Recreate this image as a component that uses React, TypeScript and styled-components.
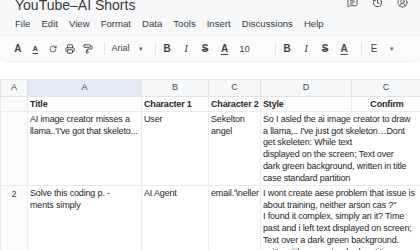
import React from 'react';
import styled, { createGlobalStyle } from 'styled-components';
import { MessageSquareText, History, CircleUserRound, Printer, PaintRoller, RotateCw } from 'lucide-react';

const MENU: Array<string> = ['File', 'Edit', 'View', 'Format', 'Data', 'Tools', 'Insert', 'Discussions', 'Help'];

const COLS: Array<number> = [27, 114, 67, 52, 91, 69];
const LETTERS: Array<string> = ['A', 'A', 'B', 'C', 'D', 'C'];

type Row = { num: string; title: string[]; c1: string[]; c2: string[]; style: string[]; h: number };

// lines are kept as in the sheet, the cells don't re-wrap
const ROWS: Array<Row> = [
  {
    num: '',
    title: ['AI image creator misses a', "llama..'I've got that skeleto..."],
    c1: ['User'],
    c2: ['Sekelton', 'angel'],
    style: [
      'So I asled the ai image creator to draw',
      "a llama,.. I've just got skeleton…Dont",
      'get skeleten: While text',
      'displayed on the screen; Text over',
      'dark green background, written in title',
      'case standard partition',
    ],
    h: 74,
  },
  {
    num: '2',
    title: ['Solve this coding p. -', 'ments simply'],
    c1: ['AI Agent'],
    c2: ["email.'\\neller"],
    style: [
      'I wont create aese problem that issue is',
      'about training, neither arson cas ?"',
      'I found it complex, simply an it? Time',
      'past and i left text displayed on screen;',
      'Text over a dark green background.',
      'written title case standard partition',
    ],
    h: 90,
  },
];

function App() {
  return (
    <Page>
      <GlobalStyle />
      <TopPanel>
        <TitleRow>
          <DocTitle>YouTube–AI Shorts</DocTitle>
          <TopIcons>
            <MessageSquareText size={11} strokeWidth={2} />
            <History size={11} strokeWidth={2.2} />
            <CircleUserRound size={11} strokeWidth={2} />
          </TopIcons>
        </TitleRow>
        <MenuBar>
          {MENU.map(item => <MenuItem key={item}>{item}</MenuItem>)}
        </MenuBar>
        <Toolbar>
          <ToolBtn $w={17.5}><Glyph $size={10} $weight={700}>A</Glyph></ToolBtn>
          <ToolBtn $w={17.5}><Glyph $size={7.5} $weight={600} $under>A</Glyph></ToolBtn>
          <ToolBtn $w={17.5}><RotateCw size={8} strokeWidth={2.4} /></ToolBtn>
          <ToolBtn $w={17.5}><Printer size={10} strokeWidth={2.2} /></ToolBtn>
          <ToolBtn $w={17.5}><PaintRoller size={10} strokeWidth={2.2} /></ToolBtn>
          <Sep $ml={7} $mr={7} />
          <ToolBtn $w={24} $left><Glyph $size={9}>Arial</Glyph></ToolBtn>
          <ToolBtn $w={10}><Caret>▾</Caret></ToolBtn>
          <Sep $ml={9} $mr={2} />
          <ToolBtn $w={19}><Glyph $size={10} $weight={700}>B</Glyph></ToolBtn>
          <ToolBtn $w={19}><Glyph $size={11} $serif $italic>I</Glyph></ToolBtn>
          <ToolBtn $w={19}><Glyph $size={10} $weight={600} $strike>S</Glyph></ToolBtn>
          <ToolBtn $w={20}><Glyph $size={10} $weight={600} $under>A</Glyph></ToolBtn>
          <ToolBtn $w={20}><Glyph $size={9.5} $weight={500}>10</Glyph></ToolBtn>
          <Sep $ml={20} $mr={2} />
          <ToolBtn $w={19}><Glyph $size={10} $weight={700}>B</Glyph></ToolBtn>
          <ToolBtn $w={19}><Glyph $size={11} $serif $italic>I</Glyph></ToolBtn>
          <ToolBtn $w={19}><Glyph $size={10} $weight={600} $strike>S</Glyph></ToolBtn>
          <ToolBtn $w={19}><Glyph $size={10} $weight={600} $under>A</Glyph></ToolBtn>
          <Sep $ml={7} $mr={3} />
          <ToolBtn $w={19}><Glyph $size={10} $weight={500}>E</Glyph></ToolBtn>
          <ToolBtn $w={17}><Caret>▾</Caret></ToolBtn>
        </Toolbar>
      </TopPanel>

      <Sheet>
        <colgroup>
          {COLS.map((w, i) => <col key={i} style={{ width: w }} />)}
        </colgroup>
        <thead>
          <tr>
            {LETTERS.map((l, i) => (
              <ColHead key={i} $active={i === 1}>{l}</ColHead>
            ))}
          </tr>
        </thead>
        <tbody>
          <HeadRow>
            <RowHead />
            <Cell $bold>Title</Cell>
            <Cell $bold>Character 1</Cell>
            <Cell $bold>Character 2</Cell>
            <Cell $bold>Style</Cell>
            <Cell $bold $center>Confirm</Cell>
          </HeadRow>
          {ROWS.map((r, i) => (
            <BodyRow key={i} $h={r.h}>
              <RowHead>{r.num}</RowHead>
              <Cell>{r.title.join('\n')}</Cell>
              <Cell>{r.c1.join('\n')}</Cell>
              <Cell>{r.c2.join('\n')}</Cell>
              <Cell colSpan={2}>{r.style.join('\n')}</Cell>
            </BodyRow>
          ))}
        </tbody>
      </Sheet>
    </Page>
  );
}

const GlobalStyle = createGlobalStyle`
  html, body {
    margin: 0;
    padding: 0;
    background: #ffffff;
    overflow: hidden;
  }
  body {
    font-family: "Liberation Sans", Arial, sans-serif;
    color: #222;
  }
`;

const Page = styled.div`
  width: 420px;
  height: 250px;
  overflow: hidden;
`;

const TopPanel = styled.div`
  background: #f7f8fa;
  border-radius: 0 0 8px 8px;
  box-shadow: 0 1px 2px rgba(0, 0, 0, 0.07);
  height: 61px;
  overflow: hidden;
`;

const TitleRow = styled.div`
  display: flex;
  justify-content: space-between;
  align-items: flex-start;
  margin-top: -3px;
  height: 16px;
  padding: 0 12px 0 15px;
`;

const DocTitle = styled.div`
  font-size: 14px;
  line-height: 16px;
  color: #3a3a3a;
`;

const TopIcons = styled.div`
  display: flex;
  gap: 14px;
  color: #555;
`;

const MenuBar = styled.div`
  display: flex;
  gap: 11px;
  margin-top: 3px;
  padding-left: 15px;
  height: 14px;
  align-items: center;
`;

const MenuItem = styled.span`
  font-size: 9.6px;
  color: #3c3c3c;
`;

const Toolbar = styled.div`
  display: flex;
  align-items: center;
  margin-top: 5px;
  height: 26px;
  padding-left: 9px;
  background: #fbfbfc;
  border-top: 1px solid #f0f1f3;
  box-sizing: border-box;
  color: #444;
`;

const ToolBtn = styled.div<{ $w: number; $left?: boolean }>`
  width: ${p => p.$w}px;
  flex: none;
  display: flex;
  align-items: center;
  justify-content: ${p => (p.$left ? 'flex-start' : 'center')};
  color: #444;
`;

const Glyph = styled.span<{
  $size: number;
  $weight?: number;
  $serif?: boolean;
  $italic?: boolean;
  $strike?: boolean;
  $under?: boolean;
}>`
  font-size: ${p => p.$size}px;
  font-weight: ${p => p.$weight || 400};
  font-family: ${p => (p.$serif ? '"Liberation Serif", serif' : '"Liberation Sans", Arial, sans-serif')};
  font-style: ${p => (p.$italic ? 'italic' : 'normal')};
  text-decoration: ${p => (p.$strike ? 'line-through' : p.$under ? 'underline' : 'none')};
  text-decoration-thickness: 1px;
  text-underline-offset: 2px;
  line-height: 1;
  color: #444;
`;

const Caret = styled.span`
  font-size: 7px;
  color: #666;
  line-height: 1;
`;

const Sep = styled.div<{ $ml: number; $mr: number }>`
  width: 1px;
  height: 13px;
  flex: none;
  background: #e2e3e6;
  margin-left: ${p => p.$ml}px;
  margin-right: ${p => p.$mr}px;
`;

const Sheet = styled.table`
  margin-top: 18px;
  width: 420px;
  table-layout: fixed;
  border-collapse: collapse;
  font-size: 9px;
  line-height: 11.7px;
`;

const ColHead = styled.th<{ $active?: boolean }>`
  height: 16px;
  padding: 0;
  font-weight: 400;
  font-size: 9px;
  color: #4a4a4a;
  text-align: center;
  background: ${p => (p.$active ? '#e4e9f6' : '#f7f8f9')};
  border: 1px solid #e1e3e6;
  border-top: 1px solid #e8e9eb;
`;

const HeadRow = styled.tr`
  height: 15px;
`;

const BodyRow = styled.tr<{ $h: number }>`
  height: ${p => p.$h}px;
`;

const RowHead = styled.td`
  padding: 3px 0 0;
  vertical-align: top;
  text-align: center;
  font-size: 9px;
  color: #333;
  background: #fbfbfb;
  border: 1px solid #ebebeb;
`;

const Cell = styled.td<{ $bold?: boolean; $center?: boolean }>`
  padding: 2px 0 0 2px;
  vertical-align: top;
  font-weight: ${p => (p.$bold ? 700 : 400)};
  text-align: ${p => (p.$center ? 'center' : 'left')};
  color: #262626;
  white-space: pre;
  letter-spacing: -0.17px;
  overflow: hidden;
  border: 1px solid #ebebeb;
`;

export default App;
